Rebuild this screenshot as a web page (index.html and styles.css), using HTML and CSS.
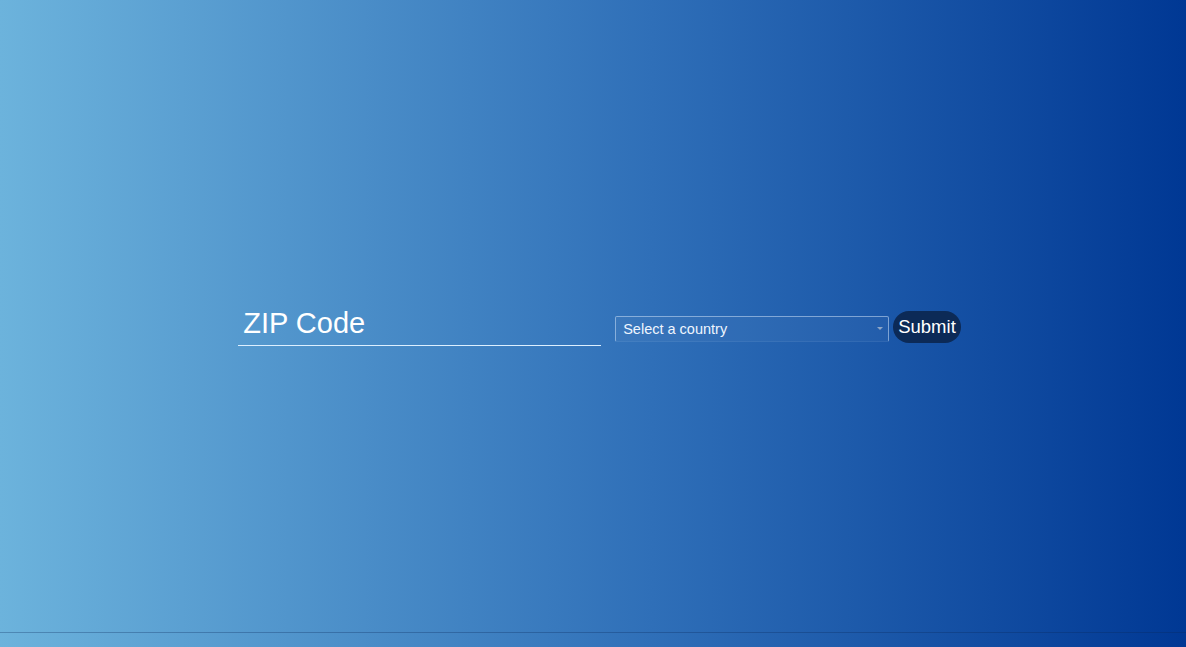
FILE: index.html
```html
<!DOCTYPE html>
<html lang="en">
<head>
<meta charset="utf-8">
<title>ZIP lookup</title>
<link rel="stylesheet" href="styles.css">
</head>
<body>
<main class="stage">
  <form class="lookup">
    <input class="zip" type="text" placeholder="ZIP Code">
    <div class="select-wrap">
      <select class="country">
        <option>Select a country</option>
      </select>
    </div>
    <button class="submit" type="button">Submit</button>
  </form>
</main>
<footer class="foot"></footer>
</body>
</html>
```
FILE: styles.css
```css
html, body {
  margin: 0;
  padding: 0;
  height: 100%;
}
body {
  background: linear-gradient(to right, #6cb3dc 0%, #2f6fb8 55%, #003894 100%);
  font-family: "Liberation Sans", Arial, sans-serif;
  color: #fff;
  overflow: hidden;
}
.stage {
  height: 632px;
  display: flex;
  align-items: center;
  justify-content: center;
  padding-left: 13px;
  padding-top: 22px;
  box-sizing: border-box;
}
.lookup {
  display: flex;
  align-items: center;
}
.zip {
  width: 363px;
  height: 40px;
  box-sizing: border-box;
  padding: 0 5px 4px 5px;
  margin-top: -3px;
  background: transparent;
  border: none;
  border-bottom: 1px solid #dcefff;
  font-family: "Liberation Sans", Arial, sans-serif;
  font-size: 29px;
  color: #fff;
  outline: none;
}
.zip::placeholder {
  color: #fff;
  opacity: 1;
}
.select-wrap {
  position: relative;
  margin-left: 14px;
  margin-top: 3px;
}
.select-wrap::after {
  content: "";
  position: absolute;
  right: 6px;
  top: 11px;
  border-left: 3px solid transparent;
  border-right: 3px solid transparent;
  border-top: 3px solid #8ea6c6;
  pointer-events: none;
}
.country {
  appearance: none;
  -webkit-appearance: none;
  width: 274px;
  height: 26px;
  box-sizing: border-box;
  padding: 0 0 0 7px;
  background: rgba(255, 255, 255, 0.04);
  border: 1px solid rgba(200, 220, 245, 0.55);
  border-bottom-color: rgba(200, 220, 245, 0.08);
  border-radius: 2px;
  font-family: "Liberation Sans", Arial, sans-serif;
  font-size: 14.5px;
  color: #eef5ff;
  outline: none;
}
.submit {
  margin-left: 4px;
  height: 32px;
  padding: 0 5px;
  background: #0c2a57;
  border: none;
  border-radius: 16px;
  font-family: "Liberation Sans", Arial, sans-serif;
  font-size: 18.5px;
  color: #fff;
  cursor: pointer;
}
.foot {
  height: 15px;
  border-top: 1px solid rgba(10, 40, 90, 0.3);
}
```
